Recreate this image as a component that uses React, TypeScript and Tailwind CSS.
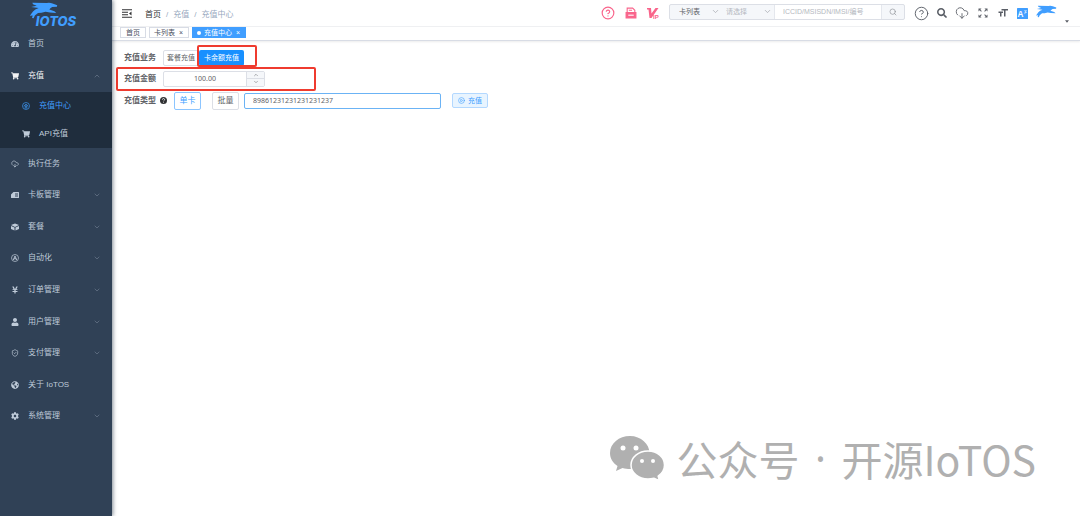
import { useState } from 'react';
import type { ReactNode } from 'react';
import type { IconType } from 'react-icons';
import { FaShoppingCart, FaYenSign, FaUser, FaGlobeAmericas, FaCog, FaTachometerAlt, FaSearch } from 'react-icons/fa';
import { MdFormatSize, MdZoomOutMap } from 'react-icons/md';
import {
    ChevronDown,
    ChevronUp,
    CircleHelp,
    CloudDownload,
    CirclePlay,
    Search,
    ShieldCheck,
} from 'lucide-react';

interface MenuItem {
    label: string;
    icon: ReactNode;
    expandable?: boolean;
}

const glyph = (Icon: IconType) => <Icon className="size-2" />;

function CardIcon() {
    return (
        <svg viewBox="0 0 16 16" className="size-2" fill="currentColor">
            <path fillRule="evenodd" d="M5 2h10a1 1 0 0 1 1 1v10a1 1 0 0 1-1 1H1a1 1 0 0 1-1-1V7zM8 5v2h6V5zM8 9v2h6V9z" />
        </svg>
    );
}

function PackageIcon() {
    return (
        <svg viewBox="0 0 16 16" className="size-2" fill="currentColor">
            <path d="M8 1l8 3-8 4-8-4zM0 6l7 3v6l-7-3zM16 6v6l-7 3V9z" />
        </svg>
    );
}

function AutoIcon() {
    return (
        <svg viewBox="0 0 16 16" className="size-2" fill="none" stroke="currentColor" strokeWidth="1.4">
            <circle cx="8" cy="8" r="7" />
            <path d="M4.500 12L8 4l3.500 8M6 9.500h4" strokeWidth="1.800" />
        </svg>
    );
}

function CenterIcon() {
    return (
        <svg viewBox="0 0 16 16" className="size-2" fill="none" stroke="currentColor" strokeWidth="1.3">
            <circle cx="8" cy="8" r="7" />
            <path d="M3.500 8.500L8 4l4.500 4.500M5 8.500h6M8 6v6M5 12h6" />
        </svg>
    );
}

function Greyhound({ className }: { className: string }) {
    return (
        <svg viewBox="86 7 90 54" className={className} fill="#409eff">
            <path d="M94 9l46 1q10-2 18 2l15 5-1 5-15 1q-7 4-9 8l16 5 6 6-20-2-14-2q-14 4-24 4l-10 8-4 9-5-1 2-8-9 1 10-14q6-7 18-11l-24-3 18-4-12-5z" />
        </svg>
    );
}

function PdfIcon() {
    return (
        <svg viewBox="0 0 20 22" className="h-3 w-3" fill="none" stroke="#f9648b" strokeWidth="2">
            <path d="M3 10V2h10l4 4v4M6 6h6" />
            <path d="M1 10h18v10H1z" fill="#f9648b" />
            <path d="M5 15h10" stroke="#fff" />
        </svg>
    );
}

function VipIcon() {
    return (
        <svg viewBox="0 0 24 24" className="h-3 w-3" fill="#f9648b">
            <path d="M0 2h8l1 11L17 2h6L9 22H5L3 5H0z" />
            <text x="12" y="23" className="text-[12px] font-bold">IP</text>
        </svg>
    );
}

const menu: MenuItem[] = [
    { label: '执行任务', icon: <CloudDownload className="size-2" /> },
    { label: '卡板管理', icon: <CardIcon />, expandable: true },
    { label: '套餐', icon: <PackageIcon />, expandable: true },
    { label: '自动化', icon: <AutoIcon />, expandable: true },
    { label: '订单管理', icon: glyph(FaYenSign), expandable: true },
    { label: '用户管理', icon: glyph(FaUser), expandable: true },
    { label: '支付管理', icon: <ShieldCheck className="size-2" />, expandable: true },
    { label: '关于 IoTOS', icon: glyph(FaGlobeAmericas) },
    { label: '系统管理', icon: glyph(FaCog), expandable: true },
];

function MenuLink({ item }: { item: MenuItem }) {
    return (
        <a href="#" className="flex min-h-0 items-center gap-[9px] px-[11px]">
            {item.icon}
            <span className="flex-1">{item.label}</span>
            {item.expandable && <ChevronDown className="size-2 text-[#8391a2]" strokeWidth={1.5} />}
        </a>
    );
}

function Sidebar() {
    return (
        <aside className="z-10 w-28 shrink-0 bg-[#304156] text-[#bfcbd9] shadow-[1px_0_4px_rgba(0,21,41,0.5)]">
            <a href="#" className="flex h-7 flex-col items-center pt-[2px]" aria-label="IOTOS">
                <Greyhound className="-ml-6 h-[17px] w-[30px] shrink-0" />
                <span className="-mt-1 font-[Inter] text-[13px] leading-[12px] font-extrabold text-[#409eff] italic">IOTOS</span>
            </a>
            <nav>
                <div className="grid h-16 auto-rows-fr">
                    <MenuLink item={{ label: '首页', icon: glyph(FaTachometerAlt) }} />
                    <a href="#" className="flex items-center gap-[9px] px-[11px] text-[#f4f4f5]">
                        <FaShoppingCart className="size-2" />
                        <span className="flex-1">充值</span>
                        <ChevronUp className="size-2 text-[#8391a2]" strokeWidth={1.5} />
                    </a>
                </div>
                <div className="grid h-14 auto-rows-fr bg-[#1f2d3d]">
                    <a href="#" className="flex items-center gap-[9px] pl-[22px] text-[#409eff]">
                        <CenterIcon />
                        充值中心
                    </a>
                    <a href="#" className="flex items-center gap-[9px] pl-[22px]">
                        <FaShoppingCart className="size-2" />
                        API充值
                    </a>
                </div>
                <div className="grid h-[284px] auto-rows-fr">
                    {menu.map((item) => (
                        <MenuLink key={item.label} item={item} />
                    ))}
                </div>
            </nav>
        </aside>
    );
}

function HeaderSelect({ label, value, className }: { label: string; value: string; className: string }) {
    return (
        <div className="grid w-[52px] items-center">
            <select aria-label={label} className={`col-start-1 row-start-1 h-full w-full appearance-none text-[7px] outline-none ${className}`}>
                <option>{value}</option>
            </select>
            <ChevronDown className="pointer-events-none z-10 col-start-1 row-start-1 mr-[2px] size-[9px] justify-self-end text-[#a8abb2]" />
        </div>
    );
}

function Header() {
    return (
        <header className="flex h-[27px] items-center border-b border-[#f0f1f3] pr-[11px] pl-[10px]">
            <button type="button" aria-label="收起菜单">
                <svg viewBox="0 0 20 18" className="h-[9px] w-[10px]" fill="none" stroke="#303133" strokeWidth="2">
                    <path d="M0 1.500h20M0 6.500h12M0 11.500h12M0 16.500h20" />
                    <path d="M19 5v8l-5-4z" fill="#303133" stroke="none" />
                </svg>
            </button>
            <nav className="ml-[13px] flex flex-1 gap-[5px] pt-1 text-[#97a8be]">
                <a href="#" className="text-[#303133]">首页</a>
                <span>/</span>
                <span>充值</span>
                <span>/</span>
                <span>充值中心</span>
            </nav>
            <div className="mr-[10px] flex items-center gap-[10px] text-[#f9648b]">
                <button type="button" aria-label="帮助"><CircleHelp className="size-[14px]" /></button>
                <button type="button" aria-label="文档"><PdfIcon /></button>
                <button type="button" aria-label="VIP"><VipIcon /></button>
            </div>
            <form className="mb-[3px] flex h-4 rounded-[2px] border border-[#dcdfe6] bg-[#f5f7fa]">
                <HeaderSelect label="查询范围" value="卡列表" className="pl-[9px] text-[#606266]" />
                <HeaderSelect label="查询类型" value="请选择" className="pl-1 text-[#b4b8c0]" />
                <input
                    aria-label="查询内容"
                    placeholder="ICCID/MSISDN/IMSI/编号"
                    className="w-[108px] border-x border-[#e4e7ed] bg-white pl-2 text-[7px] outline-none placeholder:text-[#b4b8c0]"
                />
                <button type="button" aria-label="搜索" className="flex w-[22px] items-center justify-center text-[#909399]">
                    <Search className="size-2" />
                </button>
            </form>
            <div className="ml-[9px] flex items-center gap-2 text-[#5a5e66]">
                <button type="button" aria-label="使用帮助"><CircleHelp className="size-[15px]" strokeWidth={1.5} /></button>
                <button type="button" aria-label="站内搜索"><FaSearch className="size-[10px]" /></button>
                <button type="button" aria-label="下载"><CloudDownload className="size-[14px]" strokeWidth={1.5} /></button>
                <button type="button" aria-label="全屏"><MdZoomOutMap className="size-3" /></button>
                <button type="button" aria-label="字号"><MdFormatSize className="size-3" /></button>
                <button type="button" aria-label="语言">
                    <svg viewBox="0 0 20 20" className="size-[11px]">
                        <rect width="20" height="20" rx="1" fill="#409eff" />
                        <text x="1" y="16" fill="#fff" className="text-[15px] font-bold">A</text>
                        <path d="M13 5h5M14 8h4M16 5l-2 6" stroke="#fff" />
                    </svg>
                </button>
                <button type="button" aria-label="账户" className="flex items-end gap-2">
                    <Greyhound className="mb-1 h-[15px] w-[21px]" />
                    <svg viewBox="0 0 8 5" className="h-[3px] w-1" fill="#5a5e66">
                        <path d="M0 0h8L4 5z" />
                    </svg>
                </button>
            </div>
        </header>
    );
}

function TagsView() {
    return (
        <div className="flex h-[14px] items-start gap-[3px] border-b border-[#d8dce5] pl-2 text-[7px] leading-[9px] text-[#495060] shadow-[0_1px_2px_rgba(0,0,0,0.08)]">
            <a href="#" className="border border-[#d8dce5] px-[5px]">首页</a>
            <a href="#" className="flex border border-[#d8dce5] px-1">
                卡列表<span className="ml-[3px] w-[6px] text-center">×</span>
            </a>
            <a href="#" className="flex items-center border border-[#409eff] bg-[#409eff] px-1 text-white">
                <span className="mr-[3px] size-1 rounded-full bg-white" />
                充值中心<span className="ml-[3px] w-[6px] text-center">×</span>
            </a>
        </div>
    );
}

function RechargeForm() {
    const [amount, setAmount] = useState(100);
    const [iccid, setIccid] = useState('89861231231231231237');

    return (
        <form className="relative pt-[9px] pl-3 text-[#606266]">
            <div className="flex h-4 items-center">
                <span className="w-[39px] font-bold">充值业务</span>
                <button type="button" className="h-4 w-9 rounded-l-[2px] border border-[#dcdfe6] text-[7px] whitespace-nowrap">套餐充值</button>
                <button type="button" className="h-4 rounded-[2px] bg-[#1890ff] px-[5px] text-[7px] text-white">卡余额充值</button>
            </div>
            <div className="mt-1 flex h-[17px] items-center">
                <label htmlFor="amount" className="w-[39px] font-bold">充值金额</label>
                <div className="flex h-4 w-[102px] rounded-[2px] border border-[#dcdfe6]">
                    <input
                        id="amount"
                        value={amount.toFixed(2)}
                        onChange={(e) => setAmount(Number(e.target.value) || 0)}
                        className="min-w-0 flex-1 text-center font-[Noto_Sans] text-[7px] outline-none"
                    />
                    <div className="grid w-[18px] grid-rows-2 divide-y divide-[#dcdfe6] border-l border-[#dcdfe6] bg-[#f5f7fa]">
                        <button type="button" aria-label="增加" onClick={() => setAmount(amount + 1)} className="flex items-center justify-center">
                            <ChevronUp className="size-[6px]" />
                        </button>
                        <button type="button" aria-label="减少" onClick={() => setAmount(amount - 1)} className="flex items-center justify-center">
                            <ChevronDown className="size-[6px]" />
                        </button>
                    </div>
                </div>
            </div>
            <div className="mt-1 flex h-[19px] items-center">
                <span className="w-9 font-bold">充值类型</span>
                <svg viewBox="0 0 16 16" className="mr-[7px] size-[7px]">
                    <circle cx="8" cy="8" r="8" fill="#303133" />
                    <path d="M5.500 6a2.500 2.500 0 1 1 3.500 2.200q-1 .5-1 1.500M8 11.500v1.500" fill="none" stroke="#fff" strokeWidth="1.800" />
                </svg>
                <button type="button" className="h-[18px] w-[27px] rounded-[2px] border border-[#8cc5ff] text-[#409eff]">单卡</button>
                <button type="button" className="ml-[11px] h-[18px] w-[27px] rounded-[2px] border border-[#dcdfe6]">批量</button>
                <input
                    aria-label="卡号"
                    value={iccid}
                    onChange={(e) => setIccid(e.target.value)}
                    className="ml-[5px] h-4 w-[197px] rounded-[2px] border border-[#6bb3f5] px-2 font-[Noto_Sans] text-[7px] outline-none"
                    autoFocus
                />
                <button type="button" className="ml-[11px] flex h-[15px] w-9 items-center justify-center gap-[3px] rounded-[2px] border border-[#b3d8ff] bg-[#e8f4ff] text-[7px] text-[#409eff]">
                    <CirclePlay className="size-[7px]" />
                    充值
                </button>
            </div>
            {/* highlight frames */}
            <div className="pointer-events-none absolute top-1 left-[85px] h-[22px] w-[60px] rounded-[2px] border-2 border-[#ef3b2f]" />
            <div className="pointer-events-none absolute top-[26px] left-1 h-6 w-[200px] rounded-[2px] border-2 border-[#ef3b2f]" />
        </form>
    );
}

function Watermark() {
    return (
        <div className="pointer-events-none absolute right-11 bottom-7 flex items-center text-[41px] leading-[60px] text-[#b0b0b0]">
            <svg viewBox="0 0 54 45" className="mr-3 h-[45px] w-[54px]">
                <path
                    fill="#b0b0b0"
                    d="M20 0C9 0 0 7.500 0 17c0 5.500 3 10 7.500 13L6 35l6.500-3c2.500.8 5 1 7.500 1 11 0 19.500-7 19.500-16S31 0 20 0z"
                />
                <path
                    fill="#b0b0b0"
                    stroke="#fff"
                    strokeWidth="1.5"
                    d="M38 15c-9.500 0-17 6.300-17 14s7.500 14 17 14c2 0 4-.3 6-.8l5.500 2.500-1.300-4.500C52 37.500 54.500 33.500 54.500 29 54.500 21.300 47.500 15 38 15z"
                />
                <g fill="#fff">
                    <circle cx="13" cy="12" r="2.500" />
                    <circle cx="26" cy="12" r="2.500" />
                    <circle cx="32" cy="25" r="2" />
                    <circle cx="43" cy="25" r="2" />
                </g>
            </svg>
            <span className="font-[Noto_Sans_CJK_SC]">公众号</span>
            <span className="w-[42px] text-center font-[Noto_Sans]">·</span>
            <span className="font-[Noto_Sans_CJK_SC]">开源IoTOS</span>
        </div>
    );
}

export default function App() {
    return (
        <div className="relative flex min-h-screen bg-white font-['Liberation_Sans','Noto_Sans_CJK_SC',sans-serif] text-[8px] leading-3">
            <Sidebar />
            <main className="min-w-0 flex-1">
                <Header />
                <TagsView />
                <RechargeForm />
            </main>
            <Watermark />
        </div>
    );
}
